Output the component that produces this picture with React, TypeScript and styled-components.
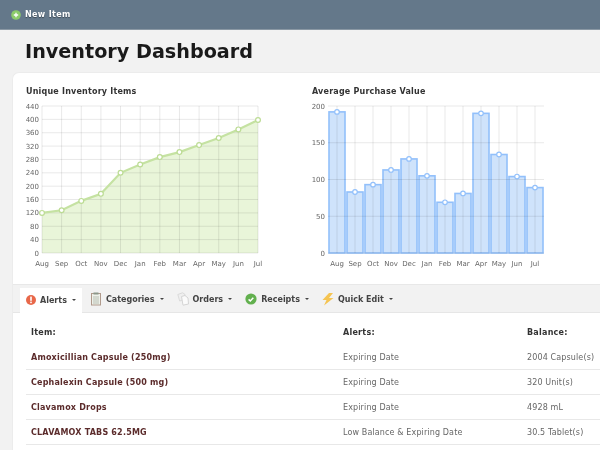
import styled, { createGlobalStyle } from 'styled-components'

const months = ['Aug', 'Sep', 'Oct', 'Nov', 'Dec', 'Jan', 'Feb', 'Mar', 'Apr', 'May', 'Jun', 'Jul']
const itemCounts = [120, 128, 156, 177, 240, 265, 287, 302, 323, 344, 370, 398]
const purchaseValues = [192, 83, 93, 113, 128, 105, 69, 81, 190, 134, 104, 89]

const rows = [
  { item: 'Amoxicillian Capsule (250mg)', alert: 'Expiring Date', balance: '2004 Capsule(s)' },
  { item: 'Cephalexin Capsule (500 mg)', alert: 'Expiring Date', balance: '320 Unit(s)' },
  { item: 'Clavamox Drops', alert: 'Expiring Date', balance: '4928 mL' },
  { item: 'CLAVAMOX TABS 62.5MG', alert: 'Low Balance & Expiring Date', balance: '30.5 Tablet(s)' },
]

const PLOT_TOP = 6
const PLOT_BOTTOM = 153
const GRID = 'rgba(0,0,0,0.09)'

const AreaChart = () => {
  const left = 16
  const right = 232
  const step = (right - left) / 11
  const toY = (v: number) => PLOT_BOTTOM - (v / 440) * 147
  const line = itemCounts.map((v, i) => `${left + i * step},${toY(v)}`).join(' ')
  const ticks = Array.from({ length: 12 }, (_, i) => i * 40)
  return (
    <svg width="250" height="175">
      <polygon points={`${left},${PLOT_BOTTOM} ${line} ${right},${PLOT_BOTTOM}`} fill="#e9f5d9" />
      {ticks.map((t) => (
        <g key={t}>
          <line x1={left} x2={right} y1={toY(t)} y2={toY(t)} stroke={GRID} />
          <AxisText x={left - 3} y={toY(t) + 2.5} textAnchor="end">{t}</AxisText>
        </g>
      ))}
      {months.map((m, i) => (
        <g key={m}>
          <line x1={left + i * step} x2={left + i * step} y1={PLOT_TOP} y2={PLOT_BOTTOM} stroke={GRID} />
          <AxisText x={left + i * step} y={166} textAnchor="middle">{m}</AxisText>
        </g>
      ))}
      <polyline points={line} fill="none" stroke="#c5e2a2" strokeWidth="2.2" />
      {itemCounts.map((v, i) => (
        <circle key={i} cx={left + i * step} cy={toY(v)} r="2.4" fill="#fff" stroke="#bcdc94" strokeWidth="1.2" />
      ))}
    </svg>
  )
}

const BarChart = () => {
  const left = 16
  const step = 18
  const toY = (v: number) => PLOT_BOTTOM - (v / 200) * 147
  return (
    <svg width="250" height="175">
      {purchaseValues.map((v, i) => (
        <rect
          key={i}
          x={left + 1 + i * step}
          y={toY(v)}
          width={16}
          height={PLOT_BOTTOM - toY(v)}
          fill="#cfe3fb"
          stroke="#92c0fb"
          strokeWidth="1.6"
        />
      ))}
      {[0, 50, 100, 150, 200].map((t) => (
        <g key={t}>
          <line x1={left} x2={232} y1={toY(t)} y2={toY(t)} stroke={GRID} />
          <AxisText x={left - 3} y={toY(t) + 2.5} textAnchor="end">{t}</AxisText>
        </g>
      ))}
      {months.map((m, i) => (
        <g key={m}>
          <line x1={left + 9 + i * step} x2={left + 9 + i * step} y1={PLOT_TOP} y2={PLOT_BOTTOM} stroke={GRID} />
          <AxisText x={left + 9 + i * step} y={166} textAnchor="middle">{m}</AxisText>
        </g>
      ))}
      {purchaseValues.map((v, i) => (
        <circle key={i} cx={left + 9 + i * step} cy={toY(v)} r="2.3" fill="#fff" stroke="#92c0fb" strokeWidth="1.2" />
      ))}
    </svg>
  )
}

const AlertIcon = () => (
  <svg width="10" height="12" viewBox="0 0 10 12">
    <circle cx="5" cy="6" r="5" fill="#e8684a" />
    <rect x="4.2" y="2.6" width="1.6" height="4.2" fill="#fff" />
    <rect x="4.2" y="7.6" width="1.6" height="1.6" fill="#fff" />
  </svg>
)

const ClipboardIcon = () => (
  <svg width="12" height="14" viewBox="0 0 12 14">
    <rect x="1.5" y="1.5" width="9" height="11.5" fill="#eef1ea" stroke="#b09a8c" />
    <rect x="3.5" y="0.5" width="5" height="2" fill="#8b978a" />
    <path d="M3 5h6M3 7h6M3 9h6M3 11h6" stroke="#a9b4a6" strokeWidth="0.8" />
  </svg>
)

const PagesIcon = () => (
  <svg width="12" height="14" viewBox="0 0 12 14">
    <path d="M0.8 2.5L5.5 0.8l2.2 1.2 1 5-6 2z" fill="#efefef" stroke="#dadada" />
    <path d="M4.5 4.5l3.5-1 3 2.5 0.5 6-5.5 1.2z" fill="#fbfbfb" stroke="#d4d4d4" />
  </svg>
)

const CheckIcon = () => (
  <svg width="12" height="14" viewBox="0 0 12 14">
    <circle cx="6" cy="7" r="5.6" fill="#62b04e" />
    <path d="M3.6 7.4l1.7 1.6 3-3.2" fill="none" stroke="#fff" strokeWidth="1.5" />
  </svg>
)

const BoltIcon = () => (
  <svg width="12" height="14" viewBox="0 0 12 14">
    <path d="M7 1L0.5 8h4L2 13.5 11.5 6H7L11 1z" fill="#f5c452" />
  </svg>
)

const tabs = [
  { label: 'Alerts', icon: <AlertIcon /> },
  { label: 'Categories', icon: <ClipboardIcon /> },
  { label: 'Orders', icon: <PagesIcon /> },
  { label: 'Receipts', icon: <CheckIcon /> },
  { label: 'Quick Edit', icon: <BoltIcon /> },
]

const App = () => {
  return (
    <Page>
      <GlobalStyle />
      <TopBar>
        <svg width="10" height="10" viewBox="0 0 10 10">
          <circle cx="5" cy="5" r="4.8" fill="#8ccb6a" />
          <path d="M5 2.8v4.4M2.8 5h4.4" stroke="#fff" strokeWidth="1.3" />
        </svg>
        <NewItem>New Item</NewItem>
      </TopBar>
      <Title>Inventory Dashboard</Title>
      <Card>
        <Charts>
          <Chart>
            <ChartTitle>Unique Inventory Items</ChartTitle>
            <AreaChart />
          </Chart>
          <Chart>
            <ChartTitle>Average Purchase Value</ChartTitle>
            <BarChart />
          </Chart>
        </Charts>
        <TabBar>
          {tabs.map((t, i) => (
            <Tab key={t.label} $active={i === 0}>
              {t.icon}
              <span>{t.label}</span>
              <Caret />
            </Tab>
          ))}
        </TabBar>
        <Table>
          <HeadRow>
            <span>Item:</span>
            <span>Alerts:</span>
            <span>Balance:</span>
          </HeadRow>
          {rows.map((r) => (
            <Row key={r.item}>
              <ItemName>{r.item}</ItemName>
              <span>{r.alert}</span>
              <span>{r.balance}</span>
            </Row>
          ))}
        </Table>
      </Card>
    </Page>
  )
}

const GlobalStyle = createGlobalStyle`
  html, body {
    margin: 0;
    height: 100%;
    overflow: hidden;
    background: #f2f2f2;
  }
`
const Page = styled.div`
  width: 600px;
  height: 450px;
  overflow: hidden;
  font-family: "DejaVu Sans", Verdana, sans-serif;
  background: #f2f2f2;
  filter: blur(0.35px);
`
const TopBar = styled.div`
  height: 30px;
  box-sizing: border-box;
  display: flex;
  align-items: center;
  gap: 4px;
  padding-left: 11px;
  background: #64788a;
  border-bottom: 1px solid #8a98a4;
`
const NewItem = styled.span`
  font-size: 8px;
  font-weight: bold;
  letter-spacing: 0.35px;
  color: #fff;
  text-shadow: 0 1px 1px rgba(0, 0, 0, 0.4);
`
const Title = styled.h1`
  margin: 0;
  height: 42px;
  padding-left: 25px;
  font-size: 19.2px;
  line-height: 44px;
  font-weight: bold;
  color: #1a1a1a;
`
const Card = styled.div`
  height: 400px;
  margin-left: 12px;
  background: #fff;
  border-radius: 7px 0 0 0;
  border: 1px solid #ececec;
  border-right: none;
`
const Charts = styled.div`
  height: 211px;
  box-sizing: border-box;
  display: flex;
  gap: 36px;
  padding: 13px 0 0 13px;
`
const Chart = styled.div`
  width: 250px;
`
const ChartTitle = styled.div`
  font-size: 8px;
  line-height: 12px;
  font-weight: bold;
  color: #333;
  margin-bottom: 2px;
  letter-spacing: 0.2px;
`
const AxisText = styled.text`
  font-size: 7px;
  fill: #666;
`
const TabBar = styled.div`
  height: 29px;
  box-sizing: border-box;
  display: flex;
  align-items: flex-end;
  gap: 2px;
  padding-left: 7px;
  background: #f2f2f2;
  border-top: 1px solid #e8e8e8;
  border-bottom: 1px solid #e6e6e6;
`
const Tab = styled.div<{ $active?: boolean }>`
  height: 25px;
  box-sizing: border-box;
  display: flex;
  align-items: center;
  gap: 4px;
  padding: 0 ${(p) => (p.$active ? 6 : 5)}px 1px 6px;
  margin-bottom: ${(p) => (p.$active ? -1 : 0)}px;
  font-size: 8px;
  font-weight: bold;
  color: #444;
  background: ${(p) => (p.$active ? '#fff' : 'transparent')};
`
const Caret = styled.i`
  width: 0;
  height: 0;
  margin-left: 1px;
  border-left: 2px solid transparent;
  border-right: 2px solid transparent;
  border-top: 2px solid #444;
`
const Table = styled.div`
  padding-left: 13px;
`
const Columns = styled.div`
  display: grid;
  grid-template-columns: 312px 184px 1fr;
  align-items: center;
  padding-left: 5px;
  font-size: 8px;
  letter-spacing: 0.13px;
  white-space: nowrap;
`
const HeadRow = styled(Columns)`
  height: 32px;
  padding-top: 6px;
  box-sizing: border-box;
  font-weight: bold;
  color: #333;
  letter-spacing: 0.25px;
`
const Row = styled(Columns)`
  height: 25px;
  box-sizing: border-box;
  color: #666;
  border-bottom: 1px solid #e8e8e8;
`
const ItemName = styled.span`
  font-weight: bold;
  letter-spacing: 0.2px;
  color: #5b2b2b;
`
export default App
